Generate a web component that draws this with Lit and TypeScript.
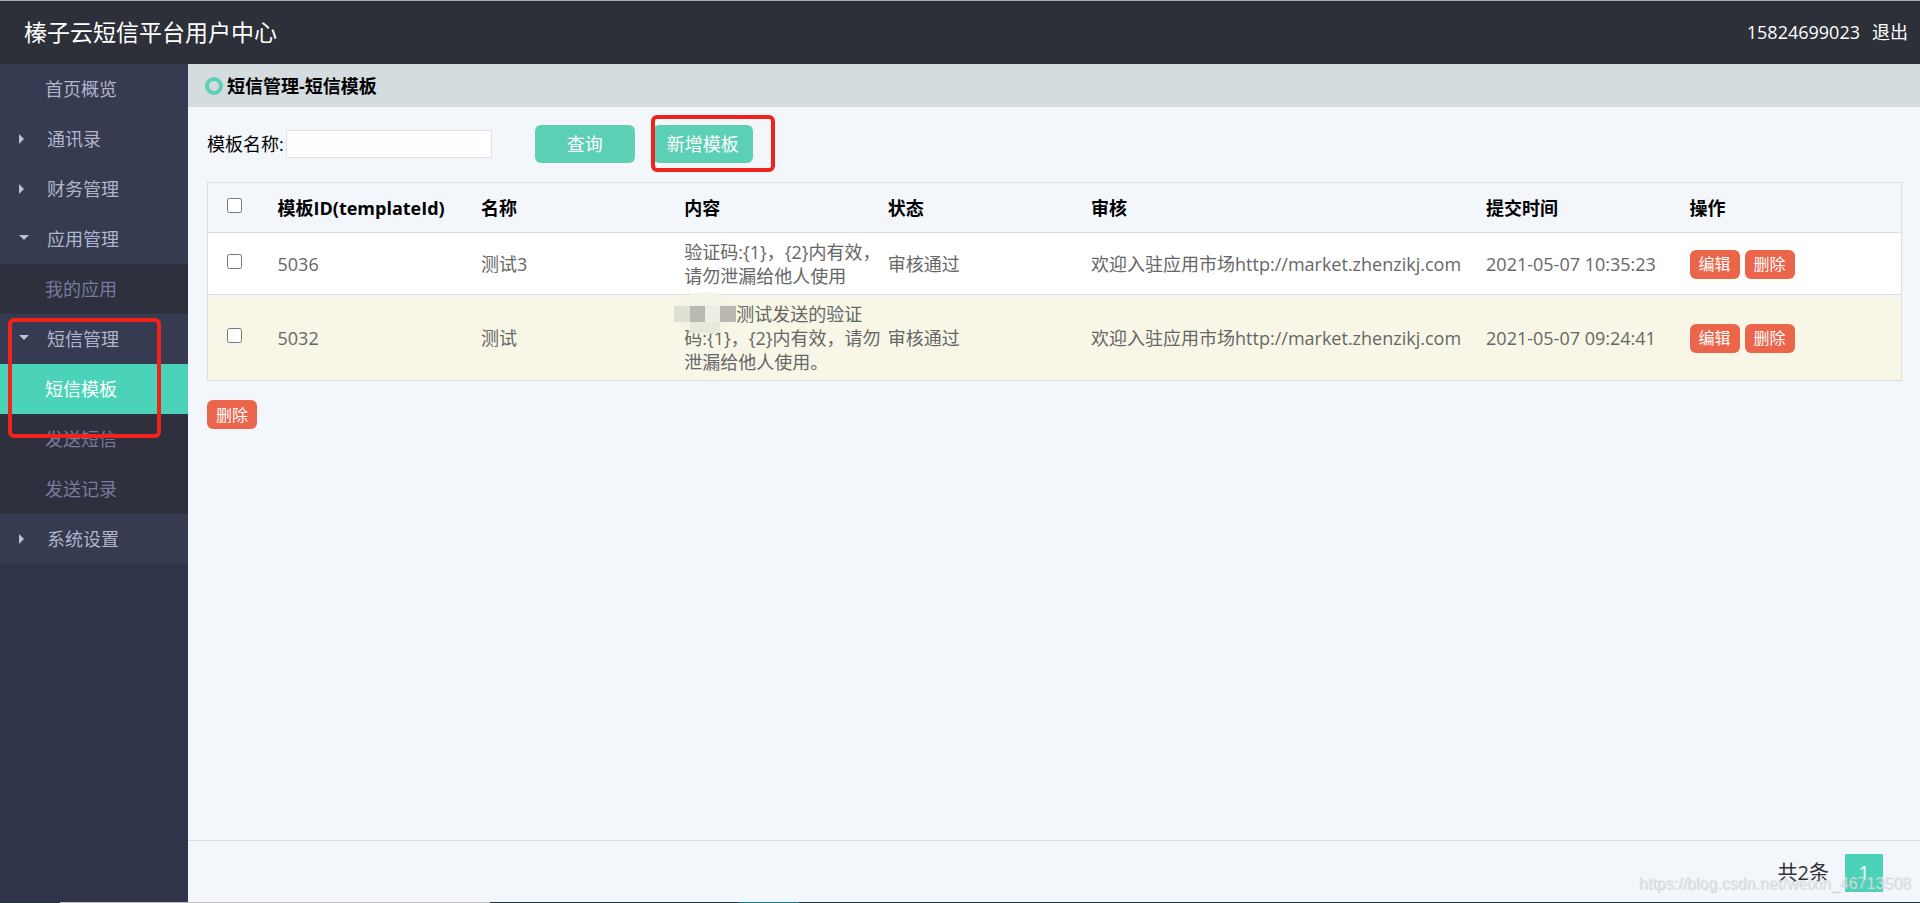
import { LitElement, html, css, nothing } from "lit";
import { customElement, state } from "lit/decorators.js";

interface MenuItem {
  label: string;
  open?: boolean;
  group?: boolean;
  active?: boolean;
  children?: MenuItem[];
}

interface Template {
  id: string;
  name: string;
  masked: boolean;
  lines: string[];
  status: string;
  review: string;
  time: string;
}

const MENU: MenuItem[] = [
  { label: "首页概览" },
  { label: "通讯录", group: true },
  { label: "财务管理", group: true },
  { label: "应用管理", group: true, open: true, children: [{ label: "我的应用" }] },
  {
    label: "短信管理",
    group: true,
    open: true,
    children: [{ label: "短信模板", active: true }, { label: "发送短信" }, { label: "发送记录" }],
  },
  { label: "系统设置", group: true },
];

const ROWS: Template[] = [
  {
    id: "5036",
    name: "测试3",
    masked: false,
    lines: ["验证码:{1}，{2}内有效，", "请勿泄漏给他人使用"],
    status: "审核通过",
    review: "欢迎入驻应用市场http://market.zhenzikj.com",
    time: "2021-05-07 10:35:23",
  },
  {
    id: "5032",
    name: "测试",
    masked: true,
    lines: ["测试发送的验证", "码:{1}，{2}内有效，请勿", "泄漏给他人使用。"],
    status: "审核通过",
    review: "欢迎入驻应用市场http://market.zhenzikj.com",
    time: "2021-05-07 09:24:41",
  },
];

const baseFont = css`
  font-family: "Open Sans", "Noto Sans CJK SC", sans-serif;
`;

@customElement("side-menu")
export class SideMenu extends LitElement {
  static styles = css`
    :host {
      display: block;
      position: relative;
      flex: 0 0 188px;
      background: #30344a;
    }
    .list {
      margin: 0;
      padding: 0;
      list-style: none;
    }
    .link {
      display: flex;
      align-items: center;
      height: 50px;
      padding-left: 45px;
      color: #b1b5cb;
      background: #373b52;
      text-decoration: none;
    }
    .link.group {
      padding-left: 19px;
    }
    .arrow {
      width: 10px;
      height: 10px;
      margin-right: 18px;
      fill: #bcc0d2;
    }
    .link.sub {
      color: #777b9f;
      background: #2e303e;
    }
    .link.active {
      color: #fff;
      background: #4ad3b8;
    }
    .mark {
      position: absolute;
      left: 8px;
      top: 254px;
      width: 145px;
      height: 112px;
      border: 4px solid #f3231b;
      border-radius: 6px;
      pointer-events: none;
    }
  `;

  private arrow(open?: boolean) {
    return html`<svg class="arrow" viewBox="0 0 10 10" aria-hidden="true">
      <path d=${open ? "M0 1H10L5 6Z" : "M0 0V10L5 5Z"}></path>
    </svg>`;
  }

  private item(m: MenuItem, sub = false): unknown {
    return html`<li>
      <a
        href="#"
        class="link ${m.group ? "group" : ""} ${sub ? "sub" : ""} ${m.active ? "active" : ""}"
        >${m.group ? this.arrow(m.open) : nothing}${m.label}</a
      >
      ${m.children
        ? html`<ul class="list">
            ${m.children.map((c) => this.item(c, true))}
          </ul>`
        : nothing}
    </li>`;
  }

  render() {
    return html`<nav>
        <ul class="list">
          ${MENU.map((m) => this.item(m))}
        </ul>
      </nav>
      <div class="mark"></div>`;
  }
}

@customElement("template-table")
export class TemplateTable extends LitElement {
  @state() private selected = new Set<string>();

  static styles = css`
    :host {
      display: block;
    }
    .table {
      width: 100%;
      table-layout: fixed;
      border-collapse: collapse;
      border: 1px solid #dadee6;
      line-height: 24px;
    }
    .c-check {
      width: 60px;
    }
    .c-review {
      width: 395px;
    }
    .c-ops {
      width: 222px;
    }
    .table tr {
      border-bottom: 1px solid #dadee6;
    }
    .table th,
    .table td {
      padding: 7px 0 6px 10px;
      text-align: left;
      white-space: nowrap;
      font-weight: inherit;
    }
    .table th {
      height: 36px;
      color: #000;
      font-weight: 700;
    }
    .table td {
      color: #666;
      background: #fff;
    }
    .table .alt td {
      background: #f8f7e7;
    }
    .table .pick {
      padding: 4px 0 9px 19px;
    }
    .box {
      display: block;
      width: 15px;
      height: 15px;
      margin: 0;
    }
    .ops {
      display: flex;
      gap: 5px;
    }
    .btn {
      height: 29px;
      width: 50px;
      padding: 0;
      border: 0;
      border-radius: 6px;
      color: #fff;
      background: #eb654b;
      font: inherit;
      font-size: 16px;
    }
    .remove {
      display: block;
      margin-top: 19px;
    }
    .first {
      display: flex;
      align-items: center;
    }
    .masked {
      position: relative;
      width: 52px;
      height: 24px;
    }
    .mosaic {
      position: absolute;
      left: -10px;
      top: -10px;
      width: 62px;
      height: 42px;
      z-index: 1;
    }
  `;

  private toggle(id: string) {
    const next = new Set(this.selected);
    if (next.has(id)) next.delete(id);
    else next.add(id);
    this.selected = next;
  }

  private toggleAll(e: Event) {
    this.selected = (e.target as HTMLInputElement).checked
      ? new Set(ROWS.map((r) => r.id))
      : new Set();
  }

  private mosaic() {
    return html`<span class="masked">
      <svg class="mosaic" viewBox="0 0 62 42" aria-hidden="true">
        <ellipse cx="31" cy="21" rx="31" ry="21" fill="#f4f3e7"></ellipse>
        <rect x="16" y="30" width="30" height="11" fill="#e9e8dc"></rect>
        <rect x="0" y="14" width="16" height="16" fill="#e0dfd4"></rect>
        <rect x="16" y="14" width="15" height="16" fill="#bab9b2"></rect>
        <rect x="31" y="14" width="15" height="16" fill="#efeee6"></rect>
        <rect x="46" y="14" width="16" height="16" fill="#b9b8b1"></rect>
      </svg>
    </span>`;
  }

  private row(r: Template, i: number) {
    return html`<tr class=${i % 2 ? "alt" : ""}>
      <td class="pick">
        <input
          class="box"
          type="checkbox"
          aria-label=${r.id}
          .checked=${this.selected.has(r.id)}
          @change=${() => this.toggle(r.id)}
        />
      </td>
      <td>${r.id}</td>
      <td>${r.name}</td>
      <td>
        ${r.lines.map(
          (l, n) =>
            html`<div class="first">${n === 0 && r.masked ? this.mosaic() : nothing}${l}</div>`
        )}
      </td>
      <td>${r.status}</td>
      <td>${r.review}</td>
      <td>${r.time}</td>
      <td>
        <div class="ops">
          <button class="btn">编辑</button>
          <button class="btn">删除</button>
        </div>
      </td>
    </tr>`;
  }

  render() {
    return html`<table class="table">
        <colgroup>
          <col class="c-check" />
          <col />
          <col />
          <col />
          <col />
          <col class="c-review" />
          <col />
          <col class="c-ops" />
        </colgroup>
        <thead>
          <tr>
            <th class="pick">
              <input class="box" type="checkbox" aria-label="全选" @change=${this.toggleAll} />
            </th>
            <th>模板ID(templateId)</th>
            <th>名称</th>
            <th>内容</th>
            <th>状态</th>
            <th>审核</th>
            <th>提交时间</th>
            <th>操作</th>
          </tr>
        </thead>
        <tbody>
          ${ROWS.map((r, i) => this.row(r, i))}
        </tbody>
      </table>
      <button class="btn remove">删除</button>`;
  }
}

@customElement("app-root")
export class AppRoot extends LitElement {
  static styles = css`
    :host {
      display: flex;
      flex-direction: column;
      position: relative;
      min-height: 100vh;
      box-sizing: border-box;
      ${baseFont}
      font-size: 18px;
      line-height: 24px;
      color: #000;
      background: #f3f6fb;
    }
    .top {
      display: flex;
      align-items: center;
      justify-content: space-between;
      height: 64px;
      box-sizing: border-box;
      padding: 0 12px 2px 24px;
      border-top: 1px solid #a9adb4;
      color: #fff;
      background: #2d2f39;
    }
    .brand {
      margin: 0;
      font-size: 23px;
      font-weight: 400;
    }
    .user {
      display: flex;
      gap: 12px;
    }
    .user a {
      color: inherit;
      text-decoration: none;
    }
    .body {
      display: flex;
      flex: 1;
    }
    .main {
      display: flex;
      flex: 1;
      flex-direction: column;
      min-width: 0;
    }
    .crumb {
      display: flex;
      align-items: center;
      gap: 4px;
      height: 43px;
      margin: 0;
      padding-left: 17px;
      background: #d5dce0;
      font-size: 18px;
      font-weight: 700;
    }
    .ring {
      width: 18px;
      height: 18px;
      fill: none;
      stroke: #5ccfb7;
      stroke-width: 4;
    }
    .content {
      flex: 1;
      padding: 18px 18px 0 19px;
    }
    .search {
      display: flex;
      align-items: center;
      height: 38px;
      margin-bottom: 19px;
    }
    .field {
      width: 206px;
      height: 28px;
      box-sizing: border-box;
      margin: 0 43px 0 2px;
      padding: 0 6px;
      border: 1px solid #dde1e9;
      background: #fff;
      font: inherit;
    }
    .btn {
      width: 100px;
      height: 38px;
      padding: 0;
      border: 0;
      border-radius: 6px;
      color: #fff;
      background: #5cd0b5;
      font: inherit;
    }
    .add {
      position: relative;
      margin-left: 18px;
    }
    .mark {
      position: absolute;
      left: -2px;
      top: -10px;
      width: 116px;
      height: 49px;
      border: 4px solid #ee241c;
      border-radius: 6px;
      pointer-events: none;
    }
    .pager {
      display: flex;
      align-items: center;
      justify-content: flex-end;
      gap: 16px;
      height: 63px;
      box-sizing: border-box;
      padding: 2px 37px 0 0;
      border-top: 1px solid #d8dde8;
      color: #333;
      font-size: 20px;
    }
    .page {
      width: 38px;
      height: 38px;
      color: #fff;
      background: #4ad3b8;
      line-height: 38px;
      text-align: center;
      text-decoration: none;
    }
    .watermark {
      position: absolute;
      right: 9px;
      bottom: 7px;
      color: rgba(225, 227, 230, 0.8);
      text-shadow: 1px 1px 0 rgba(170, 174, 180, 0.45);
      font-family: "Liberation Sans", sans-serif;
      font-size: 16px;
      pointer-events: none;
    }
    .strip {
      display: flex;
      position: absolute;
      left: 0;
      right: 0;
      bottom: 0;
      height: 1px;
      background: #21333a;
    }
    .strip .grey {
      width: 430px;
      margin-left: 60px;
      background: #bcbdc2;
    }
    .strip .teal {
      width: 61px;
      margin-left: 248px;
      background: #0c7f7c;
    }
  `;

  render() {
    return html`
      <header class="top">
        <h1 class="brand">榛子云短信平台用户中心</h1>
        <div class="user"><span>15824699023</span><a href="#">退出</a></div>
      </header>
      <div class="body">
        <side-menu></side-menu>
        <main class="main">
          <h2 class="crumb">
            <svg class="ring" viewBox="0 0 18 18" aria-hidden="true">
              <circle cx="9" cy="9" r="7"></circle>
            </svg>
            短信管理-短信模板
          </h2>
          <section class="content">
            <form class="search" @submit=${(e: Event) => e.preventDefault()}>
              <label for="name">模板名称:</label>
              <input class="field" id="name" type="text" />
              <button class="btn" type="submit">查询</button>
              <div class="add">
                <button class="btn" type="button">新增模板</button>
                <div class="mark"></div>
              </div>
            </form>
            <template-table></template-table>
          </section>
          <footer class="pager">
            <span>共2条</span>
            <a class="page" href="#">1</a>
          </footer>
        </main>
      </div>
      <div class="watermark">https://blog.csdn.net/weixin_46713508</div>
      <div class="strip"><span class="grey"></span><span class="teal"></span></div>
    `;
  }
}
